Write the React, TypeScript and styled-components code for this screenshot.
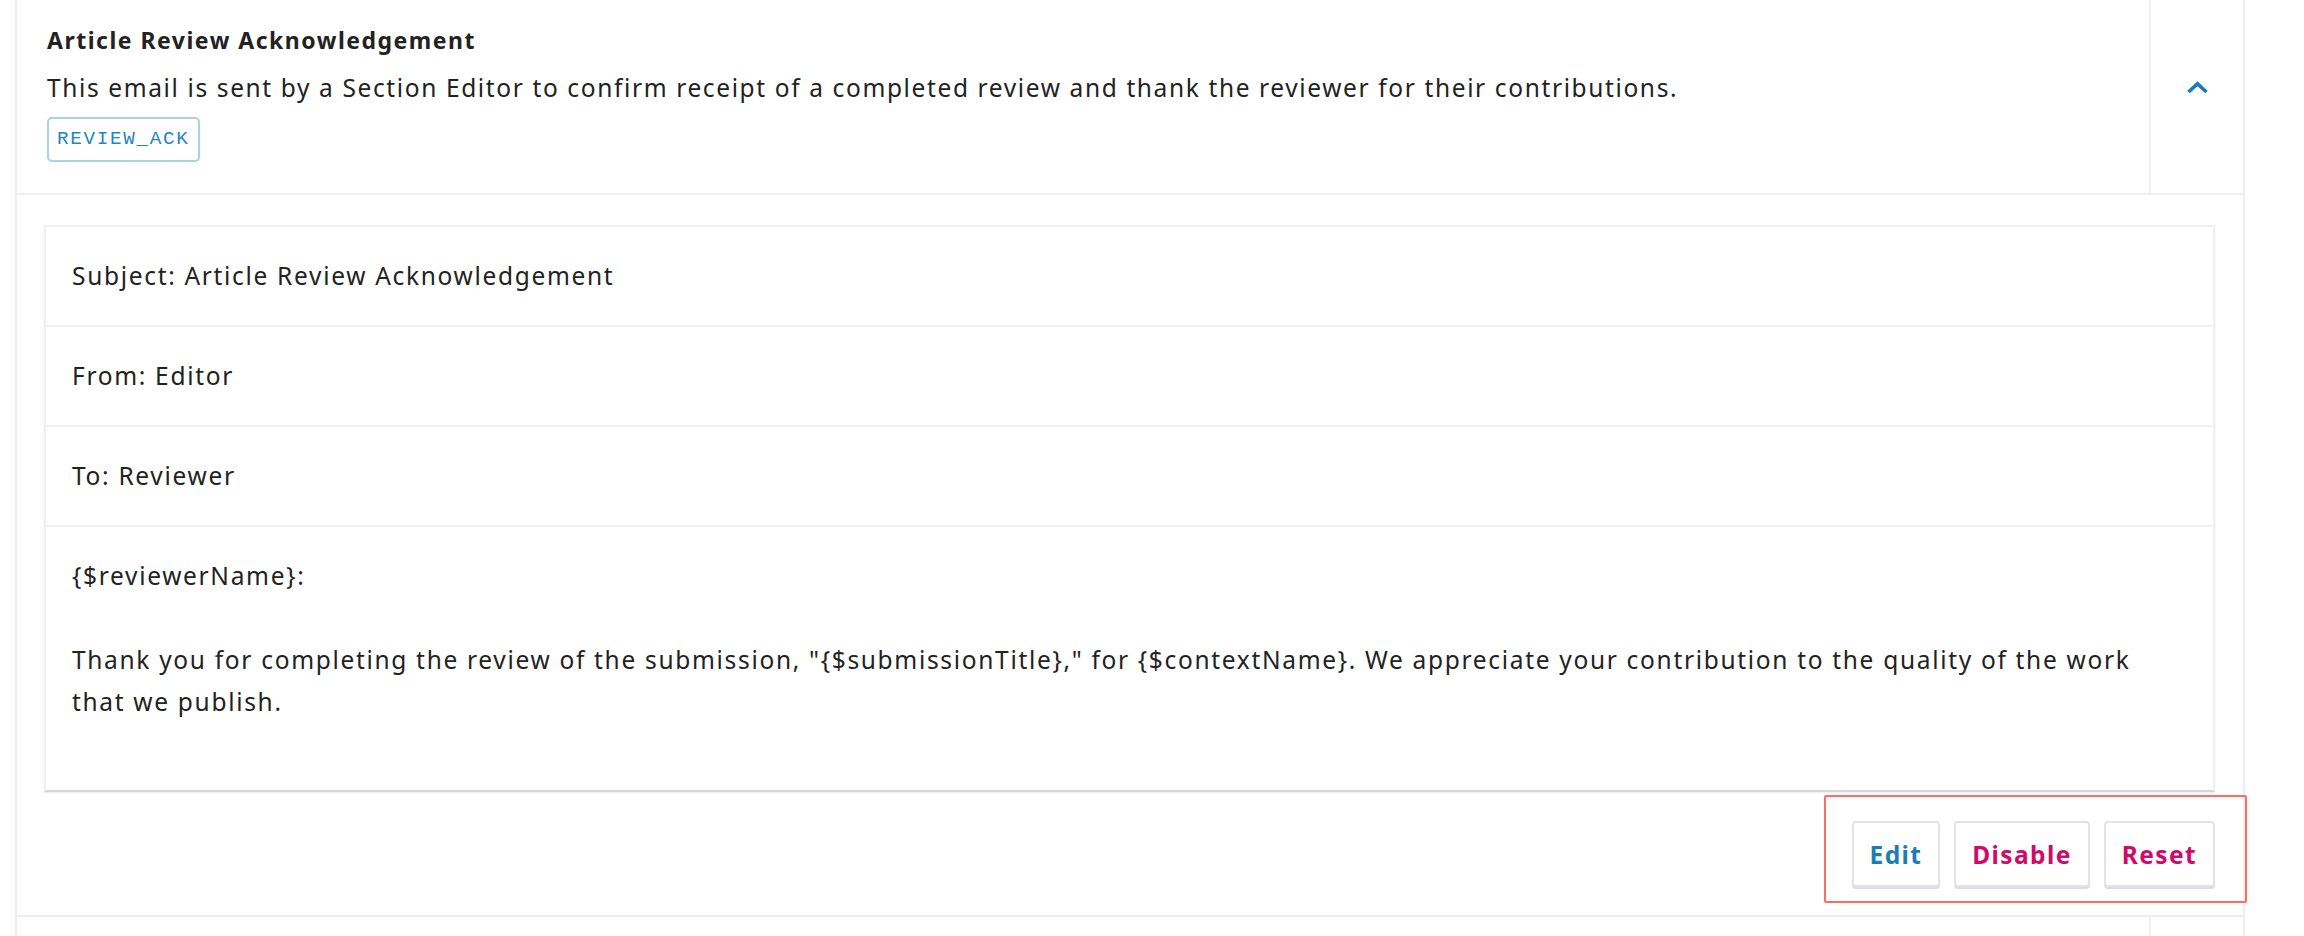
import React from "react";
import styled, { createGlobalStyle, css } from "styled-components";

const GlobalStyle = createGlobalStyle`
  html, body {
    margin: 0;
    padding: 0;
    background: #ffffff;
    overflow: hidden;
  }
  body {
    font-family: "Noto Sans", "Open Sans", "Liberation Sans", sans-serif;
    color: #222222;
  }
  * { box-sizing: border-box; }
`;

const lineColor = "#eceef1";

const Page = styled.div`
  padding-left: 15px;
  width: 2245px;
`;

const List = styled.div`
  margin-top: -18px;
  display: flex;
  flex-direction: column;
`;

const Item = styled.section`
  border-left: 2px solid ${lineColor};
  border-right: 2px solid ${lineColor};
  border-bottom: 2px solid ${lineColor};
  background: #ffffff;
`;

const ItemHeader = styled.div`
  display: flex;
  align-items: stretch;
  border-bottom: 2px solid ${lineColor};
`;

const HeaderMain = styled.div`
  flex: 1;
  min-width: 0;
  padding: 37px 30px 31px 30px;
  display: flex;
  flex-direction: column;
  align-items: flex-start;
`;

const Title = styled.h3`
  margin: 0;
  font-size: 23px;
  line-height: 42px;
  font-weight: 700;
  letter-spacing: 1.5px;
  color: #222222;
`;

const Description = styled.p`
  margin: 6px 0 0;
  font-size: 24.5px;
  line-height: 42px;
  letter-spacing: 1.62px;
  color: #222222;
`;

const KeyBadge = styled.span`
  margin-top: 8px;
  display: inline-block;
  height: 45px;
  padding: 0 8px;
  border: 2px solid #a9d1e8;
  border-radius: 5px;
  font-family: "Liberation Mono", "Courier New", monospace;
  font-size: 19.25px;
  line-height: 41px;
  letter-spacing: 1.7px;
  color: #1f86bf;
`;

const Expander = styled.button`
  flex: none;
  width: 94px;
  padding: 0;
  margin: 0;
  background: transparent;
  border: none;
  border-left: 2px solid ${lineColor};
  display: flex;
  align-items: center;
  justify-content: center;
  cursor: pointer;
`;

const ItemBody = styled.div`
  padding: 30px 28px 28px 27px;
`;

const EmailCard = styled.div`
  background: #ffffff;
  border: 2px solid #eff0f3;
  border-bottom-color: #d6d7db;
  box-shadow: 0 1px 2px rgba(0, 0, 0, 0.08);
`;

const EmailField = styled.div`
  padding: 28px 26px;
  font-size: 24.5px;
  line-height: 42px;
  letter-spacing: 1.68px;
  border-bottom: 2px solid #eff0f3;
`;

const EmailBody = styled.div`
  padding: 28px 60px 67px 26px;
  font-size: 24.5px;
  line-height: 42px;
  letter-spacing: 1.68px;

  p {
    margin: 0;
  }
  p + p {
    margin-top: 42px;
  }
`;

const Actions = styled.div`
  margin-top: 29px;
  display: flex;
  justify-content: flex-end;
`;

const ButtonGroup = styled.div`
  position: relative;
  display: flex;
  gap: 14px;
`;

const Highlight = styled.div`
  position: absolute;
  top: -26px;
  right: -32px;
  bottom: -16px;
  left: -28px;
  border: 2px solid #ff6c62;
  border-radius: 2px;
  pointer-events: none;
`;

const ActionButton = styled.button<{ $tone: "primary" | "negative" }>`
  height: 66px;
  padding: 0 16px;
  background: #ffffff;
  border: 2px solid #e2e3e6;
  border-radius: 4px;
  box-shadow: 0 2px 0 #dcdde0;
  font-family: "Noto Sans", "Open Sans", sans-serif;
  font-size: 24.5px;
  font-weight: 700;
  letter-spacing: 1.4px;
  cursor: pointer;
  ${(p) =>
    p.$tone === "primary"
      ? css`
          color: #1b7db6;
        `
      : css`
          color: #d00a6c;
        `}
`;

const NextHeader = styled.div`
  display: flex;
  height: 120px;
`;

const Chevron = () => (
  <svg width="23" height="13" viewBox="0 0 23 13" aria-hidden="true">
    <polyline
      points="2.5,11 11.5,2.8 20.5,11"
      fill="none"
      stroke="#1b7db6"
      strokeWidth="3.6"
      strokeLinejoin="miter"
    />
  </svg>
);

export default function App() {
  return (
    <>
      <GlobalStyle />
      <Page>
        <List>
          <Item>
            <ItemHeader>
              <HeaderMain>
                <Title>Article Review Acknowledgement</Title>
                <Description>
                  This email is sent by a Section Editor to confirm receipt of a
                  completed review and thank the reviewer for their
                  contributions.
                </Description>
                <KeyBadge>REVIEW_ACK</KeyBadge>
              </HeaderMain>
              <Expander aria-label="Collapse">
                <Chevron />
              </Expander>
            </ItemHeader>
            <ItemBody>
              <EmailCard>
                <EmailField>Subject: Article Review Acknowledgement</EmailField>
                <EmailField>From: Editor</EmailField>
                <EmailField>To: Reviewer</EmailField>
                <EmailBody>
                  <p>{"{$reviewerName}:"}</p>
                  <p>
                    {
                      'Thank you for completing the review of the submission, "{$submissionTitle}," for {$contextName}. We appreciate your contribution to the quality of the work that we publish.'
                    }
                  </p>
                </EmailBody>
              </EmailCard>
              <Actions>
                <ButtonGroup>
                  <Highlight />
                  <ActionButton $tone="primary">Edit</ActionButton>
                  <ActionButton $tone="negative">Disable</ActionButton>
                  <ActionButton $tone="negative">Reset</ActionButton>
                </ButtonGroup>
              </Actions>
            </ItemBody>
          </Item>
          <Item>
            <NextHeader>
              <HeaderMain />
              <Expander aria-label="Expand" />
            </NextHeader>
          </Item>
        </List>
      </Page>
    </>
  );
}
